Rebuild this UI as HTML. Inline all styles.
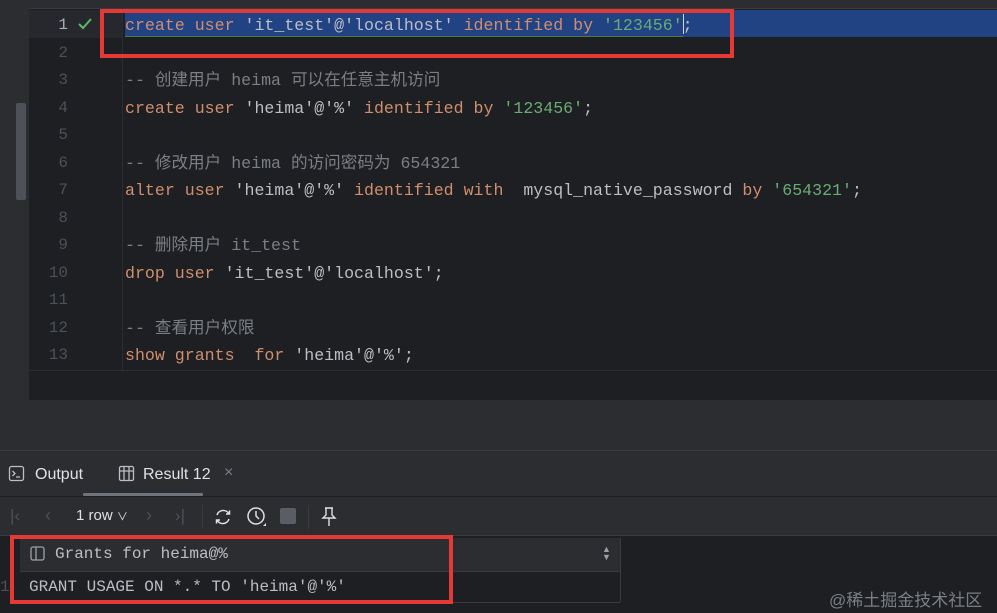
<!DOCTYPE html>
<html><head><meta charset="utf-8"><style>
*{margin:0;padding:0;box-sizing:border-box}
body{width:997px;height:613px;background:#2b2d30;position:relative;overflow:hidden;font-family:"Liberation Sans","Noto Sans CJK SC",sans-serif}
.abs{position:absolute}
.code{font-family:"Liberation Mono","Noto Sans CJK SC",monospace;font-size:16.6px;white-space:pre;color:#bcbec4}
.ln{position:absolute;left:29px;width:39px;text-align:right;font-family:"Liberation Mono",monospace;font-size:16px;color:#4b5059;height:27.5px;line-height:27.5px;margin-top:2px}
.l{position:absolute;left:125px;height:27.5px;line-height:27.5px;margin-top:2px}
.k{color:#cf8e6d}.s{color:#6aab73}.c{color:#7a7e85}
</style></head><body>
<div class="abs" style="left:29px;top:8px;width:968px;height:392px;background:#1e1f22"></div>
<div class="abs" style="left:29px;top:8px;width:968px;height:1px;background:#393b40"></div>
<div class="abs" style="left:16px;top:103px;width:10px;height:97px;background:#4e5157;border-radius:2px"></div>
<div class="abs" style="left:29px;top:10px;width:93px;height:27.5px;background:#26282e"></div>
<div class="abs" style="left:122px;top:8px;width:1px;height:362px;background:#2b2d30"></div>
<div class="abs" style="left:29px;top:370px;width:968px;height:1px;background:#2b2d30"></div>
<div class="abs" style="left:125px;top:10px;width:872px;height:27px;background:#214283"></div>
<div class="abs" style="left:125px;top:36px;width:558px;height:1px;background:#4d7a3d"></div>
<div class="abs" style="left:683px;top:14px;width:1px;height:20px;background:#cfd3da"></div>
<svg class="abs" style="left:77px;top:17px" width="16" height="14"><path d="M2 7 L6 11 L14 2" stroke="#5fb865" stroke-width="2" fill="none"/></svg>
<div class="ln" style="top:10px;color:#a9adb4">1</div>
<div class="ln" style="top:37.5px">2</div><div class="ln" style="top:65px">3</div><div class="ln" style="top:92.5px">4</div><div class="ln" style="top:120px">5</div><div class="ln" style="top:147.5px">6</div><div class="ln" style="top:175px">7</div><div class="ln" style="top:202.5px">8</div><div class="ln" style="top:230px">9</div><div class="ln" style="top:257.5px">10</div><div class="ln" style="top:285px">11</div><div class="ln" style="top:312.5px">12</div><div class="ln" style="top:340px">13</div>
<div class="code">
<div class="l" style="top:10px"><span class="k">create user </span>'it_test'@'localhost' <span class="k">identified by </span><span class="s">'123456'</span>;</div>
<div class="l c" style="top:65px">-- 创建用户 heima 可以在任意主机访问</div>
<div class="l" style="top:92.5px"><span class="k">create user </span>'heima'@'%' <span class="k">identified by </span><span class="s">'123456'</span>;</div>
<div class="l c" style="top:147.5px">-- 修改用户 heima 的访问密码为 654321</div>
<div class="l" style="top:175px"><span class="k">alter user </span>'heima'@'%' <span class="k">identified with  </span>mysql_native_password <span class="k">by </span><span class="s">'654321'</span>;</div>
<div class="l c" style="top:230px">-- 删除用户 it_test</div>
<div class="l" style="top:257.5px"><span class="k">drop user </span>'it_test'@'localhost';</div>
<div class="l c" style="top:312.5px">-- 查看用户权限</div>
<div class="l" style="top:340px"><span class="k">show grants  for </span>'heima'@'%';</div>
</div>
<div class="abs" style="left:100px;top:9px;width:634px;height:49px;border:4px solid #e53935"></div>
<div class="abs" style="left:0;top:450px;width:997px;height:1px;background:#393b40"></div>
<svg class="abs" style="left:8px;top:465px" width="18" height="18"><rect x="1.5" y="1.5" width="14" height="14" rx="2" stroke="#bcbec4" fill="none" stroke-width="1.3"/><path d="M4.5 6 L7 8.5 L4.5 11 M8 12 H12" stroke="#bcbec4" fill="none" stroke-width="1.3"/></svg>
<div class="abs" style="left:35px;top:466px;font-size:16px;color:#dfe1e5">Output</div>
<svg class="abs" style="left:118px;top:465px" width="18" height="18"><rect x="1.5" y="1.5" width="14" height="14" rx="1.5" stroke="#bcbec4" fill="none" stroke-width="1.3"/><path d="M1.5 6 H15.5 M6 1.5 V15.5 M11 1.5 V15.5" stroke="#bcbec4" stroke-width="1.3"/></svg>
<div class="abs" style="left:143px;top:466px;font-size:16px;color:#dfe1e5">Result 12</div>
<div class="abs" style="left:224px;top:464px;font-size:16px;color:#7a7e85">×</div>
<div class="abs" style="left:83px;top:493px;width:120px;height:3px;background:#6f737a;border-radius:1px"></div>
<div class="abs" style="left:0;top:496px;width:997px;height:1px;background:#1e1f22"></div>
<div class="abs" style="left:10px;top:506px;font-size:17px;color:#4e5157">|‹</div>
<div class="abs" style="left:45px;top:505px;font-size:18px;color:#4e5157">‹</div>
<div class="abs" style="left:76px;top:507px;font-size:15px;color:#dfe1e5">1 row <span style="font-size:11px">∨</span></div>
<div class="abs" style="left:146px;top:505px;font-size:18px;color:#4e5157">›</div>
<div class="abs" style="left:175px;top:506px;font-size:17px;color:#4e5157">›|</div>
<div class="abs" style="left:202px;top:505px;width:1px;height:24px;background:#393b40"></div>
<svg class="abs" style="left:213px;top:507px" width="20" height="20"><path d="M4 8 A6.5 6.5 0 0 1 16 7 M16 12 A6.5 6.5 0 0 1 4 13 M13 7 H16.5 V3.5 M7 13 H3.5 V16.5" stroke="#dfe1e5" fill="none" stroke-width="1.5"/></svg>
<svg class="abs" style="left:246px;top:506px" width="22" height="22"><circle cx="10" cy="10" r="8" stroke="#dfe1e5" fill="none" stroke-width="1.5"/><path d="M10 5 V10 L13 13" stroke="#dfe1e5" fill="none" stroke-width="1.5"/><path d="M17 20 L20 17 V20Z" fill="#dfe1e5"/></svg>
<div class="abs" style="left:280px;top:508px;width:16px;height:16px;background:#5a5d63;border-radius:2px"></div>
<div class="abs" style="left:308px;top:505px;width:1px;height:24px;background:#393b40"></div>
<svg class="abs" style="left:320px;top:506px" width="18" height="22"><path d="M5 2 H13 M6 2 V9 L3 12 H15 L12 9 V2 M9 12 V20" stroke="#dfe1e5" fill="none" stroke-width="1.4"/></svg>
<div class="abs" style="left:0;top:535px;width:997px;height:78px;background:#1e1f22"></div>
<div class="abs" style="left:0;top:535px;width:997px;height:1px;background:#393b40"></div>
<div class="abs" style="left:20px;top:538px;width:600px;height:33px;background:#2b2d30"></div>
<div class="abs" style="left:20px;top:571px;width:600px;height:1px;background:#393b40"></div>
<div class="abs" style="left:620px;top:538px;width:1px;height:64px;background:#393b40"></div>
<div class="abs" style="left:20px;top:602px;width:600px;height:1px;background:#393b40"></div>
<div class="abs" style="left:0;top:603px;width:997px;height:10px;background:#1e1f22"></div>
<svg class="abs" style="left:30px;top:546px" width="16" height="16"><rect x="1" y="1" width="13" height="13" rx="2" stroke="#9da0a8" fill="none" stroke-width="1.3"/><path d="M6 1 V14" stroke="#9da0a8" stroke-width="1.3"/></svg>
<div class="abs code" style="left:55px;top:545px;font-size:16px;color:#bcbec4">Grants for heima@%</div>
<div class="abs" style="left:602px;top:545px;font-size:9px;color:#9da0a8;line-height:8px">▲<br>▼</div>
<div class="abs code" style="left:0;top:578px;font-size:16px;color:#4b5059">1</div>
<div class="abs code" style="left:29px;top:578px;font-size:16px;color:#bcbec4">GRANT USAGE ON *.* TO 'heima'@'%'</div>
<div class="abs" style="left:10px;top:535px;width:443px;height:69px;border:4px solid #e53935"></div>
<div class="abs" style="left:829px;top:586px;font-size:17px;color:#7a7e85">@稀土掘金技术社区</div>
</body></html>
